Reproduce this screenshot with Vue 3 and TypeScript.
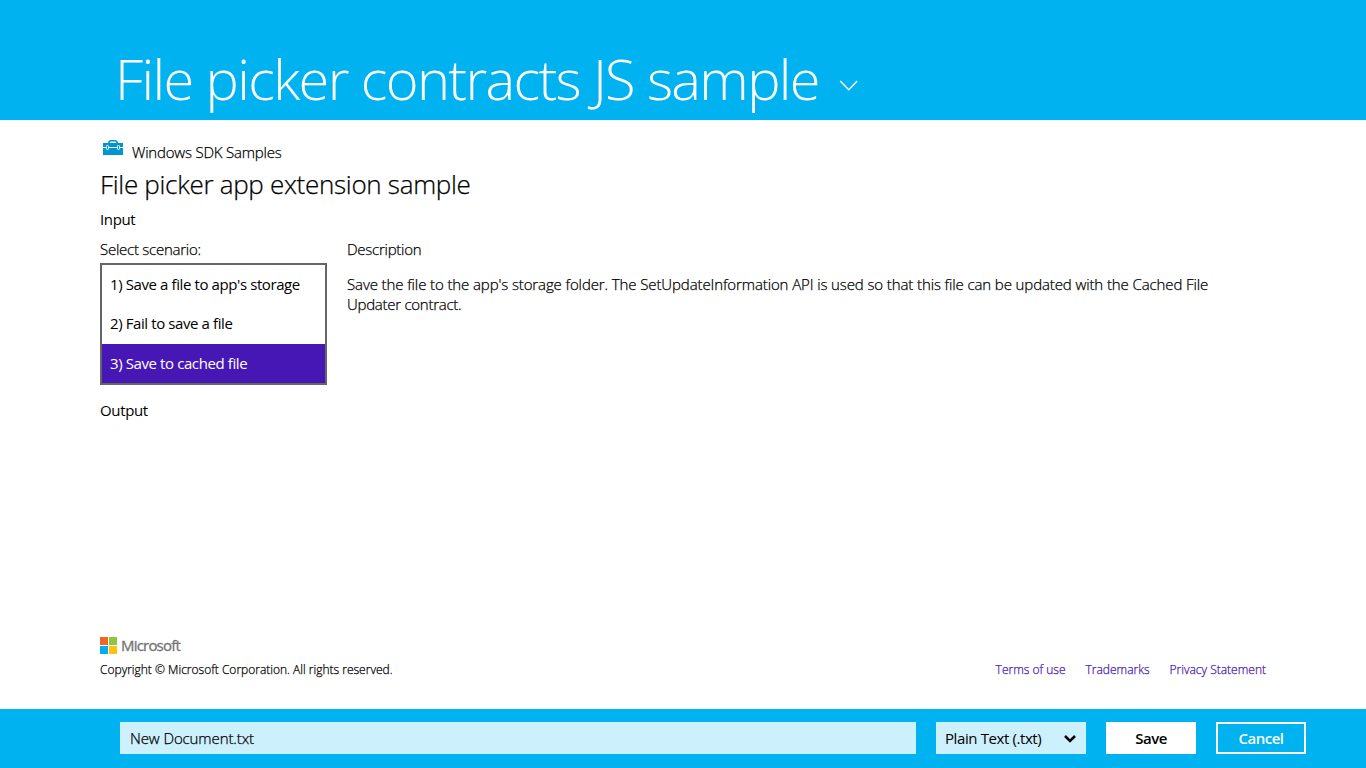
<script setup lang="ts">
import { ref } from 'vue'

const scenarios: string[] = [
  "1) Save a file to app's storage",
  '2) Fail to save a file',
  '3) Save to cached file',
]
const selected = ref(2)
const fileName = ref('New Document.txt')
const links: { label: string; cls: string }[] = [
  { label: 'Terms of use', cls: 'terms' },
  { label: 'Trademarks', cls: 'trademarks' },
  { label: 'Privacy Statement', cls: 'privacy' },
]
</script>

<template>
  <div class="picker">
    <header class="title-bar">
      <h1>File picker contracts JS sample</h1>
      <svg class="chevron" width="20" height="12" viewBox="0 0 20 12" fill="none">
        <path d="M1.2 1L9.7 9.700L18.200 1" stroke="#fff" stroke-width="1.5" />
      </svg>
    </header>

    <main class="content">
      <div class="brand">
        <svg width="20" height="16" viewBox="0 0 20 16">
          <path d="M5.500 3.500C6 1.500 6.500 .8 8 .8h4c1.500 0 2 .7 2.500 2.700" fill="none" stroke="#0095d0" stroke-width="1.500" />
          <rect y="3" width="20" height="12" fill="#0095d0" />
          <path d="M0 7.500h3.500M6 7.500h8M16.500 7.500H20" stroke="#fff" stroke-width="1" />
          <rect x="3.500" y="5.500" width="2" height="4" rx=".8" fill="#0095d0" stroke="#fff" />
          <rect x="14.500" y="5.500" width="2" height="4" rx=".8" fill="#0095d0" stroke="#fff" />
        </svg>
        <span>Windows SDK Samples</span>
      </div>
      <h2>File picker app extension sample</h2>
      <h3 class="input-title">Input</h3>
      <section class="columns">
        <div class="scenario">
          <div class="label">Select scenario:</div>
          <ul>
            <li
              v-for="(name, i) in scenarios"
              :key="name"
              :class="{ active: i === selected }"
              @click="selected = i"
            >{{ name }}</li>
          </ul>
        </div>
        <div class="description">
          <div class="label">Description</div>
          <p>
            <span class="line1">Save the file to the app's storage folder. The SetUpdateInformation API is used so that this file can be updated with the Cached File</span><br>
            <span class="line2">Updater contract.</span>
          </p>
        </div>
      </section>
      <h3 class="output-title">Output</h3>

      <footer class="legal">
        <div class="logo">
          <svg width="17" height="17" viewBox="0 0 17 17">
            <rect width="8" height="8" fill="#f26522" />
            <rect x="9" width="8" height="8" fill="#8dc63f" />
            <rect y="9" width="8" height="8" fill="#00aeef" />
            <rect x="9" y="9" width="8" height="8" fill="#ffc20e" />
          </svg>
          <span>Microsoft</span>
        </div>
        <div class="legal-row">
          <span class="copyright">Copyright © Microsoft Corporation. All rights reserved.</span>
          <nav>
            <a v-for="link in links" :key="link.label" :class="link.cls">{{ link.label }}</a>
          </nav>
        </div>
      </footer>
    </main>

    <div class="command-bar">
      <input v-model="fileName" class="file-name" type="text" spellcheck="false">
      <div class="file-type">
        <span>Plain Text (.txt)</span>
        <svg width="12" height="9" viewBox="0 0 12 9" fill="none">
          <path d="M1 2L6 7L11 2" stroke="#000" stroke-width="2.500" />
        </svg>
      </div>
      <button class="save">Save</button>
      <button class="cancel">Cancel</button>
    </div>
  </div>
</template>

<style>
body {
  margin: 0;
  overflow: hidden;
}
</style>

<style scoped>
.picker {
  width: 1366px;
  height: 768px;
  display: flex;
  flex-direction: column;
  box-sizing: border-box;
  background: #fff;
  color: #000;
  font: 400 15px/20px "Open Sans", "Noto Sans", sans-serif;
  white-space: nowrap;
}
h1, h2, h3, p, ul {
  margin: 0;
  padding: 0;
  font-weight: 400;
}
.title-bar {
  height: 120px;
  flex: none;
  box-sizing: border-box;
  padding: 38px 0 0 115px;
  display: flex;
  align-items: flex-start;
  background: #00b2f0;
  color: #fff;
}
.title-bar h1 {
  width: 724px;
  font-size: 56px;
  font-weight: 300;
  line-height: 80px;
  letter-spacing: -1.65px;
}
.chevron {
  margin-top: 42px;
}
.content {
  flex: 1;
  display: flex;
  flex-direction: column;
  padding: 20px 100px 0;
}
.brand {
  display: flex;
  height: 25px;
  padding-left: 3px;
  gap: 9px;
}
.brand span {
  font-weight: 300;
  line-height: 24px;
  letter-spacing: -0.2px;
  -webkit-text-stroke: 0.25px;
}
h2 {
  font-size: 26px;
  font-weight: 300;
  line-height: 38px;
  letter-spacing: -0.3px;
  -webkit-text-stroke: 0.25px;
}
h3 {
  font-size: 15px;
  line-height: 20px;
  letter-spacing: -0.35px;
}
.input-title {
  margin-top: 6px;
}
.columns {
  display: flex;
  gap: 20px;
  margin-top: 10px;
}
.scenario {
  width: 227px;
}
.label {
  height: 24px;
  font-weight: 300;
  letter-spacing: -0.25px;
  -webkit-text-stroke: 0.25px;
}
ul {
  list-style: none;
  border: 2px solid #666;
}
li {
  height: 39px;
  line-height: 39px;
  padding-left: 8px;
  letter-spacing: -0.4px;
}
li:first-child {
  line-height: 38px;
}
li:nth-child(2) {
  height: 40px;
  line-height: 39px;
}
li.active {
  background: #4617b4;
  color: #fff;
}
.description p {
  margin-top: 11px;
  font-weight: 300;
  -webkit-text-stroke: 0.25px;
}
.line1 {
  letter-spacing: -0.11px;
}
.line2 {
  letter-spacing: -0.27px;
}
.output-title {
  margin-top: 15px;
}
.legal {
  margin-top: auto;
  padding-bottom: 30px;
}
.logo {
  display: flex;
  gap: 4px;
  height: 17px;
  align-items: center;
  color: #737373;
}
.logo span {
  margin-top: -2px;
  letter-spacing: -0.8px;
  -webkit-text-stroke: 0.3px;
}
.legal-row {
  display: flex;
  justify-content: space-between;
  margin-top: 7px;
  font-size: 12px;
  font-weight: 300;
  line-height: 18px;
  -webkit-text-stroke: 0.25px;
}
nav {
  display: flex;
  gap: 20px;
  color: #4617b4;
}
.command-bar {
  height: 59px;
  flex: none;
  box-sizing: border-box;
  display: flex;
  gap: 20px;
  padding: 13px 60px 14px 120px;
  background: #00b2f0;
}
.file-name {
  flex: 1;
  min-width: 0;
  box-sizing: border-box;
  border: 0;
  outline: 0;
  border-radius: 0;
  padding: 0 10px;
  background: #ccf0fc;
  color: #000;
  font: 300 15px/32px "Open Sans", "Noto Sans", sans-serif;
  letter-spacing: -0.1px;
  -webkit-text-stroke: 0.25px;
}
.file-type {
  width: 150px;
  box-sizing: border-box;
  display: flex;
  align-items: center;
  justify-content: space-between;
  padding: 0 10px 0 9px;
  background: #ccf0fc;
  letter-spacing: -0.4px;
}
button {
  width: 90px;
  box-sizing: border-box;
  border: 2px solid #fff;
  padding: 0;
  font: 600 15px/28px "Open Sans", "Noto Sans", sans-serif;
  letter-spacing: -0.5px;
}
.save {
  background: #fff;
  color: #000;
}
.cancel {
  background: #00b2f0;
  color: #fff;
}
</style>
